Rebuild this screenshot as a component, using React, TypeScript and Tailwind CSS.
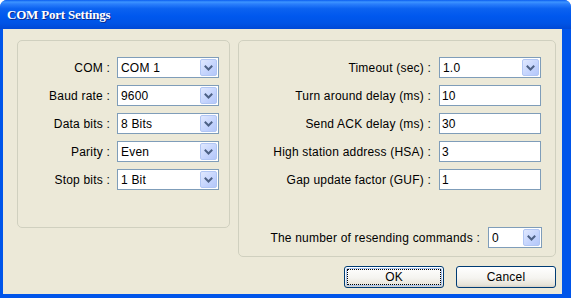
import React from "react";

const Chevron = () => (
  <svg width="9" height="6" viewBox="0 0 9 6" className="block">
    <path d="M1.5 1.5 L4.5 4.5 L7.5 1.5" fill="none" stroke="#4D6185" strokeWidth="2" strokeLinecap="square" />
  </svg>
);

const Combo = ({ value, w }: { value: string; w: string }) => (
  <div className={`${w} h-[21px] border border-[#7F9DB9] bg-white flex items-center`}>
    <span className="flex-1 pl-[3px] leading-none text-black">{value}</span>
    <div className="w-[17px] h-[17px] mr-px rounded-[2px] border border-[#B1C6F4] bg-[linear-gradient(135deg,#E0E8FE_0%,#C3D3FD_60%,#B4C7F9_100%)] flex items-center justify-center">
      <Chevron />
    </div>
  </div>
);

const TextBox = ({ value }: { value: string }) => (
  <div className="w-[102px] h-[21px] border border-[#7F9DB9] bg-white flex items-center pl-[2px] leading-none text-black">
    {value}
  </div>
);

const LeftRow = ({ label, value }: { label: string; value: string }) => (
  <div className="flex items-center h-[21px]">
    <div className="w-[92px] text-right whitespace-nowrap text-black">{label}</div>
    <div className="ml-[7px]">
      <Combo value={value} w="w-[102px]" />
    </div>
  </div>
);

const RightRow = ({ label, children }: { label: string; children: React.ReactNode }) => (
  <div className="flex items-center h-[21px]">
    <div className="w-[192px] text-right whitespace-nowrap text-black">{label}</div>
    <div className="ml-[8px]">{children}</div>
  </div>
);

const XPButton = ({ label, def }: { label: string; def?: boolean }) => (
  <div className="w-[100px] h-[22px] rounded-[3px] border border-[#003C74] bg-[linear-gradient(180deg,#FFFFFF_0%,#F5F4F0_55%,#E6E3D8_90%,#D6D0C5_100%)] p-[1px]">
    <div
      className={`w-full h-full rounded-[2px] flex items-center justify-center text-black ${
        def ? "shadow-[inset_0_0_0_1px_#A8C4F0] outline-1 outline-dotted outline-[#000] -outline-offset-2" : ""
      }`}
    >
      {label}
    </div>
  </div>
);

export default function App() {
  return (
    <div className="w-[571px] h-[298px] flex flex-col bg-[#0055EA] rounded-t-[7px] overflow-hidden text-[12px] tracking-[0.2px] font-['Liberation_Sans',Arial,sans-serif]">
      <div className="h-[29px] shrink-0 flex items-center pl-[7px] bg-[linear-gradient(180deg,#0A5DF0_0%,#3D95FF_7%,#2A7EFB_14%,#0B62F0_30%,#0058EE_55%,#0054E6_80%,#0049D6_100%)]">
        <span className="text-white font-bold text-[13px] font-['Liberation_Serif',serif] [text-shadow:1px_1px_0_#0B2A8C] tracking-[-0.2px]">
          COM Port Settings
        </span>
      </div>
      <div className="flex-1 ml-[3px] mr-[9px] mb-[4px] bg-[#ECE9D8] pl-[14px] pt-[11px] pr-[6px] flex gap-[8px] items-start">
        <div className="w-[213px] h-[188px] border border-[#D0D0BF] rounded-[5px] pt-[16px] flex flex-col gap-[7px]">
          <LeftRow label="COM :" value="COM 1" />
          <LeftRow label="Baud rate :" value="9600" />
          <LeftRow label="Data bits :" value="8 Bits" />
          <LeftRow label="Parity :" value="Even" />
          <LeftRow label="Stop bits :" value="1 Bit" />
        </div>
        <div className="flex flex-col">
          <div className="w-[318px] h-[217px] border border-[#D0D0BF] rounded-[5px] pt-[16px] flex flex-col">
            <div className="flex flex-col gap-[7px]">
              <RightRow label="Timeout (sec) :">
                <Combo value="1.0" w="w-[102px]" />
              </RightRow>
              <RightRow label="Turn around delay (ms) :">
                <TextBox value="10" />
              </RightRow>
              <RightRow label="Send ACK delay (ms) :">
                <TextBox value="30" />
              </RightRow>
              <RightRow label="High station address (HSA) :">
                <TextBox value="3" />
              </RightRow>
              <RightRow label="Gap update factor (GUF) :">
                <TextBox value="1" />
              </RightRow>
            </div>
            <div className="flex items-center h-[21px] mt-[37px]">
              <div className="w-[241px] text-right whitespace-nowrap text-black">The number of resending commands :</div>
              <div className="ml-[8px]">
                <Combo value="0" w="w-[54px]" />
              </div>
            </div>
          </div>
          <div className="flex justify-end gap-[12px] mt-[9px]">
            <XPButton label="OK" def />
            <XPButton label="Cancel" />
          </div>
        </div>
      </div>
    </div>
  );
}
